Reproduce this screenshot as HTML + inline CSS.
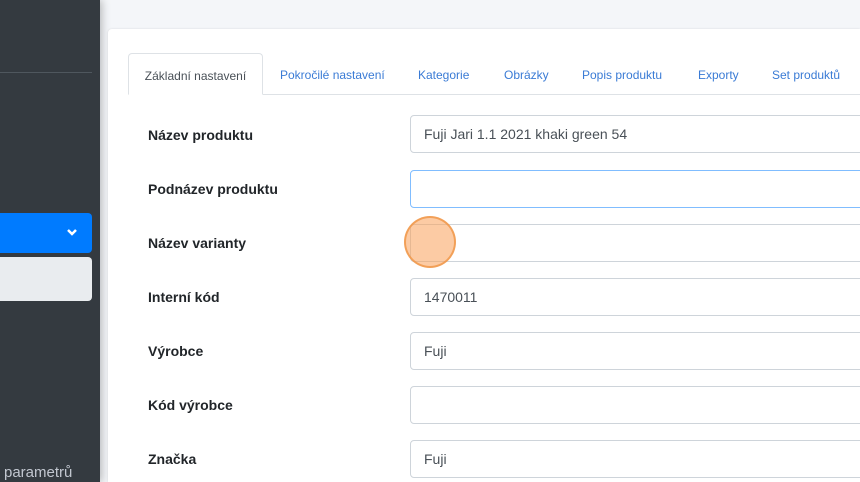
<!DOCTYPE html>
<html><head><meta charset="utf-8"><style>
*{box-sizing:border-box;margin:0;padding:0}
html,body{width:860px;height:482px;overflow:hidden}
body{background:#f4f6f9;font-family:"Liberation Sans",sans-serif;position:relative}
.sb{position:absolute;left:0;top:0;width:100px;height:482px;background:#343a40;box-shadow:2px 0 8px rgba(0,0,0,.25)}
.sb .ln{position:absolute;left:0;top:72px;width:92px;height:1px;background:#4f575e}
.sb .blue{position:absolute;left:0;top:213px;width:92px;height:40px;background:#007bff;border-radius:0 4px 4px 0}
.sb .blue svg{position:absolute;left:66px;top:14px}
.sb .gray{position:absolute;left:0;top:257px;width:92px;height:44px;background:#e9ecef;border-radius:0 4px 4px 0}
.sb .par{position:absolute;left:4px;top:464px;color:#c2c7d0;font-size:15px}
.card{position:absolute;left:108px;top:29px;width:752px;height:453px;background:#fff;border-radius:4px 0 0 0;box-shadow:0 0 2px rgba(0,0,0,.12)}
.tabs{position:absolute;left:20px;top:24px;right:0;height:42px;border-bottom:1px solid #dee2e6}
.tab{position:absolute;top:0;height:42px;line-height:44px;font-size:12px;color:#3a7bd5}
.tab.act{left:0;width:135px;border:1px solid #dee2e6;border-bottom:1px solid #fff;border-radius:4px 4px 0 0;color:#495057;text-align:center;height:42px;background:#fff}
.lbl{position:absolute;left:40px;font-size:14px;font-weight:bold;color:#212529}
.inp{position:absolute;left:302px;width:470px;height:38px;border:1px solid #ced4da;border-radius:4px;font-size:14px;color:#495057;padding-left:13px;line-height:36px}
.inp.f{border-color:#80bdff}
.dot{position:absolute;left:404px;top:216px;width:52px;height:52px;border-radius:50%;background:rgba(250,160,90,.55);border:2px solid rgba(240,150,70,.8)}
</style></head><body>
<div class="sb"><div class="ln"></div><div class="blue"><svg width="12" height="10" viewBox="0 0 12 10"><path d="M2 3l4 4 4-4" stroke="#fff" stroke-width="2.5" fill="none"/></svg></div><div class="gray"></div><div class="par">parametrů</div></div>
<div class="card">
<div class="tabs">
<div class="tab act">Základní nastavení</div>
<div class="tab" style="left:152px">Pokročilé nastavení</div>
<div class="tab" style="left:290px">Kategorie</div>
<div class="tab" style="left:376px">Obrázky</div>
<div class="tab" style="left:454px">Popis produktu</div>
<div class="tab" style="left:570px">Exporty</div>
<div class="tab" style="left:644px">Set produktů</div>
</div>
<div class="lbl" style="top:98px">Název produktu</div><div class="inp" style="top:86px">Fuji Jari 1.1 2021 khaki green 54</div>
<div class="lbl" style="top:152px">Podnázev produktu</div><div class="inp f" style="top:141px"></div>
<div class="lbl" style="top:206px">Název varianty</div><div class="inp" style="top:195px"></div>
<div class="lbl" style="top:260px">Interní kód</div><div class="inp" style="top:249px">1470011</div>
<div class="lbl" style="top:314px">Výrobce</div><div class="inp" style="top:303px">Fuji</div>
<div class="lbl" style="top:368px">Kód výrobce</div><div class="inp" style="top:357px"></div>
<div class="lbl" style="top:422px">Značka</div><div class="inp" style="top:411px">Fuji</div>
</div>
<div class="dot"></div>
</body></html>
